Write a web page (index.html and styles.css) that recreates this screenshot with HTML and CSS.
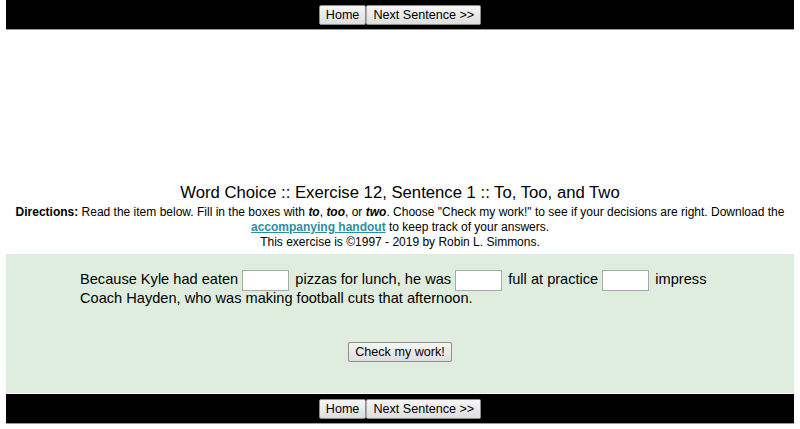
FILE: index.html
```html
<!DOCTYPE html>
<html>
<head>
<meta charset="utf-8">
<link rel="stylesheet" href="styles.css">
</head>
<body>
<div class="page">
  <div class="nav">
    <button class="btn">Home</button><button class="btn">Next Sentence &gt;&gt;</button>
  </div>
  <div class="ad"></div>
  <h1 class="title">Word Choice :: Exercise 12, Sentence 1 :: To, Too, and Two</h1>
  <div class="directions">
    <b>Directions:</b> Read the item below. Fill in the boxes with <b><i>to</i></b>, <b><i>too</i></b>, or <b><i>two</i></b>. Choose "Check my work!" to see if your decisions are right. Download the <a class="handout" href="#">accompanying handout</a> to keep track of your answers.<br>
    This exercise is ©1997 - 2019 by Robin L. Simmons.
  </div>
  <div class="exercise">
    <p class="sentence">Because Kyle had eaten <input class="box" type="text"> pizzas for lunch, he was <input class="box" type="text"> full at practice <input class="box" type="text"> impress Coach Hayden, who was making football cuts that afternoon.</p>
    <div class="check"><button class="btn">Check my work!</button></div>
  </div>
  <div class="nav">
    <button class="btn">Home</button><button class="btn">Next Sentence &gt;&gt;</button>
  </div>
</div>
</body>
</html>
```
FILE: styles.css
```css
html, body {
  margin: 0;
  padding: 0;
  background: #fff;
  font-family: "Liberation Sans", Arial, sans-serif;
  color: #000;
}
.page {
  margin: 0 6px;
}
.nav {
  background: #000;
  height: 29px;
  border-bottom: 1px solid #999;
  display: flex;
  justify-content: center;
  align-items: center;
}
.btn {
  font-family: "Liberation Sans", Arial, sans-serif;
  font-size: 12.6px;
  color: #000;
  background: linear-gradient(#f6f6f6, #dedede);
  border: 1px solid #8e8e8e;
  border-radius: 2px;
  height: 20px;
  padding: 0 6px;
  margin: 0;
  line-height: 18px;
}
.nav .btn + .btn {
  border-left: 1px solid #aaa;
}
.ad {
  height: 152px;
}
.title {
  font-size: 16.7px;
  font-weight: normal;
  text-align: center;
  margin: 0;
  line-height: 22px;
}
.directions {
  font-size: 12px;
  line-height: 15px;
  text-align: center;
  margin: 1px 0 4px;
}
.handout {
  color: #2b8fa3;
  font-weight: bold;
}
.exercise {
  background: #dfeddf;
  padding: 16px 74px 30px;
  height: 93px;
  margin-bottom: 1px;
}
.sentence {
  margin: 0;
  font-size: 14.6px;
  line-height: 19px;
}
.box {
  width: 41px;
  height: 17px;
  border: 1px solid #aaa;
  padding: 1px 2px;
  margin: -2px 2px -2px 0;
  vertical-align: middle;
  background: #fff;
  box-sizing: content-box;
}
.check {
  text-align: center;
  margin-top: 34px;
}
.check .btn {
  padding: 0 6px;
}
```
